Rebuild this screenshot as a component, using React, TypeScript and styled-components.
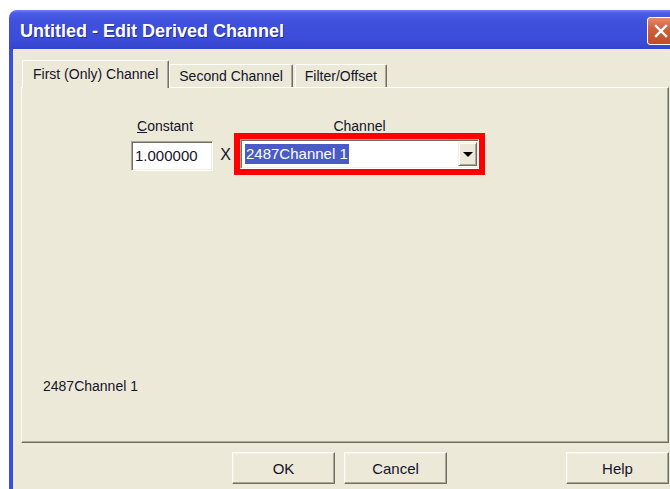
import React from "react";
import styled, { createGlobalStyle } from "styled-components";

const GlobalStyle = createGlobalStyle`
  html, body {
    margin: 0;
    padding: 0;
    background: #ffffff;
    overflow: hidden;
  }
  body {
    font-family: "Liberation Sans", Arial, sans-serif;
    font-size: 14px;
    color: #14142a;
  }
`;

const Window = styled.div`
  margin: 10px 0 0 9px;
  width: 672px;
  height: 490px;
  display: flex;
  flex-direction: column;
  border-radius: 8px 8px 0 0;
  overflow: hidden;
`;

const TitleBar = styled.div`
  height: 39px;
  flex: none;
  display: flex;
  align-items: center;
  justify-content: space-between;
  padding: 0 6px 0 11px;
  background: linear-gradient(
    to bottom,
    #7083f4 0px,
    #4a5ce6 3px,
    #3e50dc 12px,
    #3b4cd8 30px,
    #3444cc 39px
  );
`;

const Title = styled.span`
  color: #ffffff;
  font-weight: bold;
  font-size: 18px;
  line-height: 22px;
  text-shadow: 1px 1px 0 #22309a;
  padding-top: 2px;
`;

const CloseButton = styled.div`
  width: 26px;
  height: 26px;
  margin-top: 2px;
  border: 1px solid #ffffff;
  border-radius: 3px;
  background: linear-gradient(to bottom, #e88a66 0%, #d0603a 40%, #bf4d27 100%);
  display: flex;
  align-items: center;
  justify-content: center;
`;

const Client = styled.div`
  flex: 1;
  background: #ece9d8;
  border-left: 4px solid #3c4edc;
  border-right: 4px solid #3c4edc;
  padding: 11px 8px 0 8px;
  display: flex;
  flex-direction: column;
`;

const TabRow = styled.div`
  height: 27px;
  display: flex;
  align-items: flex-end;
  padding-left: 1px;
`;

const Tab = styled.div<{ $active?: boolean }>`
  position: relative;
  z-index: ${(p) => (p.$active ? 2 : 1)};
  height: ${(p) => (p.$active ? 28 : 23)}px;
  margin-bottom: ${(p) => (p.$active ? -1 : 0)}px;
  margin-right: ${(p) => (p.$active ? 0 : 2)}px;
  padding: 0 ${(p) => (p.$active ? 10 : 9)}px;
  box-sizing: border-box;
  display: flex;
  align-items: ${(p) => (p.$active ? "flex-start" : "center")};
  padding-top: ${(p) => (p.$active ? 5 : 0)}px;
  background: #ece9d8;
  border-top: 1px solid #ffffff;
  border-left: 1px solid #ffffff;
  border-right: 1px solid #716f64;
  box-shadow: inset -1px 0 0 #aca899;
  border-radius: 2px 2px 0 0;
  white-space: nowrap;
  line-height: 16px;
`;

const Panel = styled.div`
  height: 356px;
  box-sizing: border-box;
  border-top: 1px solid #ffffff;
  border-left: 1px solid #ffffff;
  border-right: 1px solid #716f64;
  border-bottom: 1px solid #716f64;
  box-shadow: inset -1px -1px 0 #aca899;
  display: flex;
  flex-direction: column;
`;

const FieldRow = styled.div`
  display: flex;
  align-items: flex-start;
  margin: 30px 0 0 109px;
`;

const FieldColumn = styled.div<{ $center?: boolean }>`
  display: flex;
  flex-direction: column;
  align-items: ${(p) => (p.$center ? "center" : "flex-start")};
`;

const FieldLabel = styled.label<{ $gap: number; $indent?: number }>`
  line-height: 16px;
  margin: 0 0 ${(p) => p.$gap}px ${(p) => p.$indent ?? 0}px;
  white-space: nowrap;
`;

const Mnemonic = styled.span`
  text-decoration: underline;
`;

const sunken = `
  box-sizing: border-box;
  background: #ffffff;
  border-top: 1px solid #aca899;
  border-left: 1px solid #aca899;
  border-right: 1px solid #ffffff;
  border-bottom: 1px solid #ffffff;
  box-shadow: inset 1px 1px 0 #716f64, inset -1px -1px 0 #f1efe2;
`;

const NumberBox = styled.div`
  ${sunken}
  width: 82px;
  height: 30px;
  padding: 0 0 0 3px;
  display: flex;
  align-items: center;
  line-height: 16px;
  font-size: 15px;
`;

const Times = styled.span`
  width: 11px;
  margin: 29px 9px 0 7px;
  text-align: center;
  line-height: 16px;
  font-size: 16px;
`;

const Combo = styled.div`
  ${sunken}
  width: 239px;
  height: 30px;
  padding: 2px 1px 2px 2px;
  display: flex;
  align-items: center;
  outline: 6px solid #ff0000;
`;

const Selection = styled.span`
  margin-left: 2px;
  height: 20px;
  padding: 0 1px;
  background: #4a5bc6;
  color: #ffffff;
  line-height: 20px;
  font-size: 15px;
  white-space: nowrap;
`;

const DropButton = styled.div`
  margin-left: auto;
  width: 19px;
  height: 24px;
  box-sizing: border-box;
  background: #ece9d8;
  border-top: 1px solid #f1efe2;
  border-left: 1px solid #f1efe2;
  border-right: 1px solid #716f64;
  border-bottom: 1px solid #716f64;
  box-shadow: inset 1px 1px 0 #ffffff, inset -1px -1px 0 #aca899;
  display: flex;
  align-items: center;
  justify-content: center;
`;

const Arrow = styled.span`
  width: 0;
  height: 0;
  border-left: 5px solid transparent;
  border-right: 5px solid transparent;
  border-top: 5px solid #000000;
  margin-top: 1px;
`;

const ChannelName = styled.div`
  margin: auto 0 48px 21px;
  line-height: 16px;
`;

const ButtonRow = styled.div`
  display: flex;
  margin-top: 9px;
  padding-left: 211px;
`;

const Button = styled.button<{ $push?: boolean }>`
  width: 103px;
  height: 32px;
  margin-left: ${(p) => (p.$push ? "auto" : "9px")};
  box-sizing: border-box;
  background: #ece9d8;
  border-top: 1px solid #ffffff;
  border-left: 1px solid #ffffff;
  border-right: 1px solid #716f64;
  border-bottom: 1px solid #716f64;
  box-shadow: inset -1px -1px 0 #aca899, inset 1px 1px 0 #f1efe2;
  font-family: "Liberation Sans", Arial, sans-serif;
  font-size: 15px;
  color: #14142a;
  padding: 0;
  &:first-child {
    margin-left: 0;
  }
`;

export default function App() {
  return (
    <>
      <GlobalStyle />
      <Window>
        <TitleBar>
          <Title>Untitled - Edit Derived Channel</Title>
          <CloseButton>
            <svg width="16" height="16" viewBox="0 0 16 16">
              <path
                d="M3 3 L13 13 M13 3 L3 13"
                stroke="#ffffff"
                strokeWidth="2.4"
                strokeLinecap="square"
              />
            </svg>
          </CloseButton>
        </TitleBar>
        <Client>
          <TabRow>
            <Tab $active>First (Only) Channel</Tab>
            <Tab>Second Channel</Tab>
            <Tab>Filter/Offset</Tab>
          </TabRow>
          <Panel>
            <FieldRow>
              <FieldColumn>
                <FieldLabel $gap={7} $indent={6}>
                  <Mnemonic>C</Mnemonic>onstant
                </FieldLabel>
                <NumberBox>1.000000</NumberBox>
              </FieldColumn>
              <Times>X</Times>
              <FieldColumn $center>
                <FieldLabel $gap={5}>Channel</FieldLabel>
                <Combo>
                  <Selection>2487Channel 1</Selection>
                  <DropButton>
                    <Arrow />
                  </DropButton>
                </Combo>
              </FieldColumn>
            </FieldRow>
            <ChannelName>2487Channel 1</ChannelName>
          </Panel>
          <ButtonRow>
            <Button>OK</Button>
            <Button>Cancel</Button>
            <Button $push>Help</Button>
          </ButtonRow>
        </Client>
      </Window>
    </>
  );
}
